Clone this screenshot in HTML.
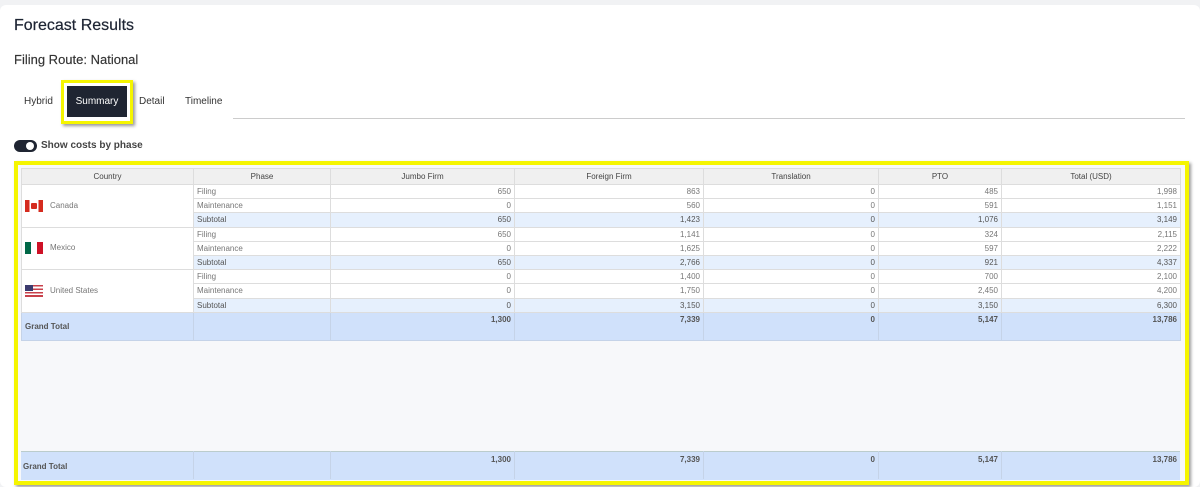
<!DOCTYPE html>
<html><head><style>
body{margin:0;width:1200px;height:487px;background:#f1f2f4;font-family:"Liberation Sans",sans-serif;position:relative;overflow:hidden}
.card{position:absolute;left:0;top:5px;width:1200px;height:482px;background:#fff;border-radius:6px}
.a{position:absolute}
table{border-collapse:collapse;position:absolute;left:21px;top:168px;width:1159px;table-layout:fixed;font-size:8px;color:#777;background:#fff}
td,th{border:1px solid #ddd;padding:0 3px;height:13.2px;white-space:nowrap;overflow:hidden;background:#fff}
th{background:#f0f0f0;font-weight:normal;color:#444;height:15px}
td.n{text-align:right}
tr.s td{background:#e6f0fd;color:#555}
tr.g td{background:#d0e1fb;font-weight:bold;color:#555;vertical-align:top;padding-top:2px;border-color:#c5d3e8}
.flag{display:inline-block;width:18px;height:12px;vertical-align:middle;margin-right:7px}
</style></head><body>
<div class="card"></div>
<div class="a" style="left:14px;top:17px;font-size:16px;color:#1d2433;-webkit-text-stroke:0.2px #1d2433">Forecast Results</div>
<div class="a" style="left:14px;top:52px;font-size:13px;color:#333;-webkit-text-stroke:0.15px #333">Filing Route: National</div>
<div class="a" style="left:24px;top:96px;font-size:10px;color:#333">Hybrid</div>
<div class="a" style="left:61px;top:80px;width:66px;height:38px;border:3px solid #f5f500;background:#fff;box-shadow:2px 2px 3px #999"></div>
<div class="a" style="left:67px;top:86px;width:60px;height:31px;background:#1f2532;color:#fff;font-size:10px;text-align:center;line-height:32px">Summary</div>
<div class="a" style="left:139px;top:96px;font-size:10px;color:#333">Detail</div>
<div class="a" style="left:185px;top:96px;font-size:10px;color:#333">Timeline</div>
<div class="a" style="left:233px;top:118px;width:952px;height:1px;background:#ccc"></div>
<div class="a" style="left:14px;top:140px;width:23px;height:12px;border-radius:6px;background:#1f2532"></div>
<div class="a" style="left:26px;top:142px;width:8px;height:8px;border-radius:50%;background:#fff"></div>
<div class="a" style="left:41px;top:140px;font-size:10px;font-weight:bold;color:#444">Show costs by phase</div>
<div class="a" style="left:14px;top:161px;width:1167px;height:316px;border:4px solid #f5f500;background:#f7f8fa;box-shadow:2px 2px 3px #999"></div>
<div class="a" style="left:21px;top:451px;width:1159px;height:28px;background:#d0e1fb;border-top:1px solid #bcc"></div>
<div class="a" style="left:193px;top:451px;width:1px;height:28px;background:#c5d3e8"></div>
<div class="a" style="left:330px;top:451px;width:1px;height:28px;background:#c5d3e8"></div>
<div class="a" style="left:514px;top:451px;width:1px;height:28px;background:#c5d3e8"></div>
<div class="a" style="left:703px;top:451px;width:1px;height:28px;background:#c5d3e8"></div>
<div class="a" style="left:878px;top:451px;width:1px;height:28px;background:#c5d3e8"></div>
<div class="a" style="left:1001px;top:451px;width:1px;height:28px;background:#c5d3e8"></div>
<div class="a" style="left:23px;top:462px;font-size:8px;font-weight:bold;color:#555">Grand Total</div>
<div class="a" style="left:330px;top:455px;width:181px;text-align:right;font-size:8px;font-weight:bold;color:#555">1,300</div>
<div class="a" style="left:514px;top:455px;width:186px;text-align:right;font-size:8px;font-weight:bold;color:#555">7,339</div>
<div class="a" style="left:703px;top:455px;width:172px;text-align:right;font-size:8px;font-weight:bold;color:#555">0</div>
<div class="a" style="left:878px;top:455px;width:120px;text-align:right;font-size:8px;font-weight:bold;color:#555">5,147</div>
<div class="a" style="left:1001px;top:455px;width:176px;text-align:right;font-size:8px;font-weight:bold;color:#555">13,786</div>
<table>
<colgroup><col style="width:172px"><col style="width:137px"><col style="width:184px"><col style="width:189px"><col style="width:175px"><col style="width:123px"><col style="width:179px"></colgroup>
<tr><th>Country</th><th>Phase</th><th>Jumbo Firm</th><th>Foreign Firm</th><th>Translation</th><th>PTO</th><th>Total (USD)</th></tr>
<tr><td rowspan="3"><span class="flag" style="background:linear-gradient(90deg,#d52b1e 25%,#fff 25%,#fff 75%,#d52b1e 75%);position:relative"><span style="position:absolute;left:6px;top:3px;width:6px;height:6px;background:#d52b1e;border-radius:1px"></span></span>Canada</td><td>Filing</td><td class="n">650</td><td class="n">863</td><td class="n">0</td><td class="n">485</td><td class="n">1,998</td></tr>
<tr><td>Maintenance</td><td class="n">0</td><td class="n">560</td><td class="n">0</td><td class="n">591</td><td class="n">1,151</td></tr>
<tr class="s"><td>Subtotal</td><td class="n">650</td><td class="n">1,423</td><td class="n">0</td><td class="n">1,076</td><td class="n">3,149</td></tr>
<tr><td rowspan="3"><span class="flag" style="background:linear-gradient(90deg,#006847 33%,#fff 33%,#fff 67%,#ce1126 67%)"></span>Mexico</td><td>Filing</td><td class="n">650</td><td class="n">1,141</td><td class="n">0</td><td class="n">324</td><td class="n">2,115</td></tr>
<tr><td>Maintenance</td><td class="n">0</td><td class="n">1,625</td><td class="n">0</td><td class="n">597</td><td class="n">2,222</td></tr>
<tr class="s"><td>Subtotal</td><td class="n">650</td><td class="n">2,766</td><td class="n">0</td><td class="n">921</td><td class="n">4,337</td></tr>
<tr><td rowspan="3"><span class="flag" style="background:repeating-linear-gradient(180deg,#c8414b 0 1.7px,#fff 1.7px 3.4px);position:relative"><span style="position:absolute;left:0;top:0;width:8px;height:6px;background:#3c3b6e"></span></span>United States</td><td>Filing</td><td class="n">0</td><td class="n">1,400</td><td class="n">0</td><td class="n">700</td><td class="n">2,100</td></tr>
<tr><td>Maintenance</td><td class="n">0</td><td class="n">1,750</td><td class="n">0</td><td class="n">2,450</td><td class="n">4,200</td></tr>
<tr class="s"><td>Subtotal</td><td class="n">0</td><td class="n">3,150</td><td class="n">0</td><td class="n">3,150</td><td class="n">6,300</td></tr>
<tr class="g" style="height:28px"><td style="vertical-align:middle;padding-top:0">Grand Total</td><td></td><td class="n">1,300</td><td class="n">7,339</td><td class="n">0</td><td class="n">5,147</td><td class="n">13,786</td></tr>
</table>
</body></html>
